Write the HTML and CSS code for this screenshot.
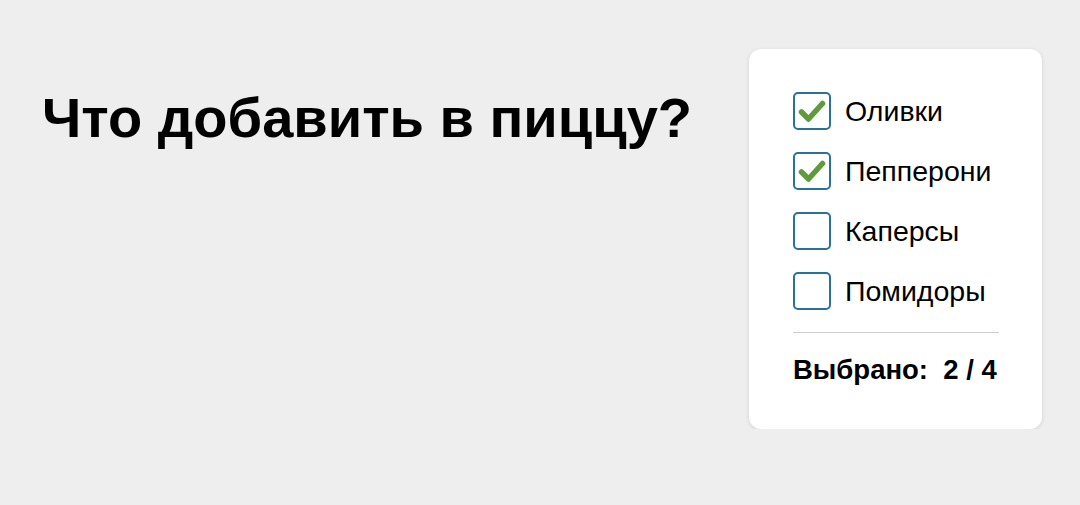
FILE: index.html
```html
<!DOCTYPE html>
<html lang="ru">
<head>
<meta charset="utf-8">
<title>Пицца</title>
<link rel="stylesheet" href="styles.css">
</head>
<body>
<div class="page">
  <h1 class="title">Что добавить в пиццу?</h1>
  <div class="card">
    <ul class="list">
      <li class="item">
        <span class="box checked"><svg viewBox="0 0 38 38" width="38" height="38"><path d="M8.5 20 L15.5 27 L29.5 11.5" fill="none" stroke="#5f9b3c" stroke-width="5.5" stroke-linecap="round" stroke-linejoin="round"/></svg></span>
        <span class="label">Оливки</span>
      </li>
      <li class="item">
        <span class="box checked"><svg viewBox="0 0 38 38" width="38" height="38"><path d="M8.5 20 L15.5 27 L29.5 11.5" fill="none" stroke="#5f9b3c" stroke-width="5.5" stroke-linecap="round" stroke-linejoin="round"/></svg></span>
        <span class="label">Пепперони</span>
      </li>
      <li class="item">
        <span class="box"></span>
        <span class="label">Каперсы</span>
      </li>
      <li class="item">
        <span class="box"></span>
        <span class="label">Помидоры</span>
      </li>
    </ul>
    <div class="divider"></div>
    <div class="summary">Выбрано:&nbsp; 2 / 4</div>
  </div>
</div>
</body>
</html>
```
FILE: styles.css
```css
html, body {
  margin: 0;
  padding: 0;
  background: #eeeeee;
  font-family: "Liberation Sans", Arial, sans-serif;
  color: #000;
}
.page {
  display: flex;
  align-items: flex-start;
  justify-content: space-between;
  padding: 49px 38px 0 42px;
}
.title {
  margin: 41px 0 0 0;
  font-size: 56px;
  line-height: 56px;
  font-weight: bold;
}
.card {
  width: 293px;
  box-sizing: border-box;
  background: #fff;
  border-radius: 12px;
  box-shadow: 0 1px 4px rgba(0,0,0,0.12);
  padding: 43px 30px 43px 44px;
}
.list {
  list-style: none;
  margin: 0;
  padding: 0;
  display: flex;
  flex-direction: column;
  gap: 22px;
}
.item {
  display: flex;
  align-items: center;
  gap: 14px;
  height: 38px;
}
.box {
  width: 38px;
  height: 38px;
  box-sizing: border-box;
  border: 2px solid #2a7199;
  border-radius: 5px;
  position: relative;
  flex: none;
}
.box svg {
  position: absolute;
  left: -2px;
  top: -2px;
}
.label {
  font-size: 28.5px;
}
.divider {
  height: 1px;
  background: #cccccc;
  margin: 22px 13px 0 0;
}
.summary {
  margin-top: 21px;
  font-size: 27.5px;
  font-weight: bold;
  line-height: 32px;
  white-space: nowrap;
}
```
